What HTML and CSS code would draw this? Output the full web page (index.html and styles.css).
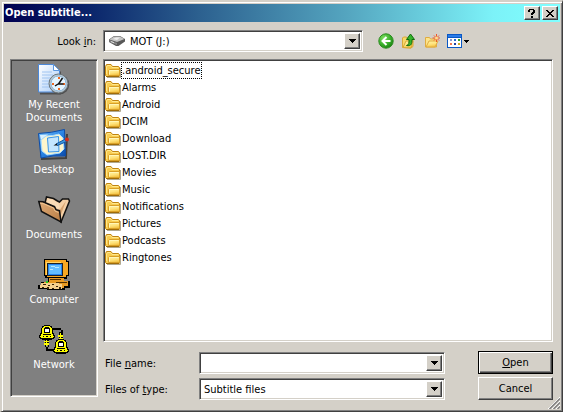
FILE: index.html
```html
<!DOCTYPE html>
<html lang="en">
<head>
<meta charset="utf-8">
<title>Open subtitle...</title>
<link rel="stylesheet" href="styles.css">
</head>
<body>
<svg class="defs" aria-hidden="true">
  <defs>
    <linearGradient id="gold" x1="0" y1="0" x2="0.3" y2="1">
      <stop offset="0" stop-color="#fff5a8"/><stop offset="0.6" stop-color="#ffe37c"/><stop offset="1" stop-color="#f4c548"/>
    </linearGradient>
    <linearGradient id="blue" x1="0" y1="0" x2="1" y2="1">
      <stop offset="0" stop-color="#7cc4fa"/><stop offset="0.5" stop-color="#2a84e4"/><stop offset="1" stop-color="#0848a8"/>
    </linearGradient>
    <radialGradient id="green" cx="0.35" cy="0.3" r="0.8">
      <stop offset="0" stop-color="#7ee060"/><stop offset="0.6" stop-color="#36ac28"/><stop offset="1" stop-color="#14780c"/>
    </radialGradient>
    <linearGradient id="paper" x1="0" y1="0" x2="1" y2="1">
      <stop offset="0" stop-color="#ffffff"/><stop offset="1" stop-color="#a8ccf8"/>
    </linearGradient>
    <linearGradient id="tan" x1="0" y1="0" x2="1" y2="1">
      <stop offset="0" stop-color="#e0ac78"/><stop offset="1" stop-color="#b87c44"/>
    </linearGradient>
    <symbol id="folder" viewBox="0 0 16 16">
      <path d="M2 14.500h13.500V5" fill="none" stroke="#b0a890"/>
      <path d="M.5 12.500v-9l1-2h4.500l1.500 2h6l1 1v8l-1 1h-12z" fill="#f8cc50" stroke="#c08410"/>
      <path d="M1.500 11V4l1-1.500h3l1.500 2h6" fill="none" stroke="#ffe88c"/>
      <path d="M3.500 12.500v-5l1-1h10v6z" fill="url(#gold)" stroke="#d8a028"/>
      <path d="M4.500 11.500v-4h9" fill="none" stroke="#fff6b8"/>
      <path d="M1 13.500h13.500" fill="none" stroke="#a06c08"/>
    </symbol>
    <symbol id="arrow" viewBox="0 0 7 4"><path d="M0 0h7v1h-1v1h-1v1h-1v1h-1v-1h-1v-1h-1v-1h-1z" shape-rendering="crispEdges"/></symbol>
    <symbol id="bell" viewBox="0 0 16 15">
      <path d="M5 0h6v1h2v2h1v5h1v2h1v3h-1v1h-2v1h-10v-1h-2v-1h-1v-3h1v-2h1v-5h1v-2h2z" fill="#000"/>
      <path d="M5 1h6v1h1v1h1v6h1v2h1v1h-1v1h-12v-1h-1v-1h1v-2h1v-6h1v-1h1z" fill="#ff0"/>
      <path d="M6 2h4v1h1v5h-6v-5h1zM4 9h8v1h-8zM4 11h1v1h-1zM7 11h2v1h-2zM11 11h1v1h-1z" fill="#000"/>
      <path d="M6 4h4v3h-4z" fill="#fff"/>
    </symbol>
  </defs>
</svg>
<main class="dialog">
  <header class="titlebar">
    <h1>Open subtitle...</h1>
    <button class="caption" type="button" aria-label="Help"><svg viewBox="0 0 8 9" width="8" height="9" shape-rendering="crispEdges"><path d="M1 0h5v1h1v3h-1v1h-1v1h-2v-2h1v-1h1v-2h-3v2h-2v-2h1zM3 7h2v2h-2z"/></svg></button>
    <button class="caption close" type="button" aria-label="Close"><svg viewBox="0 0 8 7" width="8" height="7" shape-rendering="crispEdges"><path d="M0 0h2v1h1v1h2v-1h1v-1h2v1h-1v1h-1v1h-1v1h1v1h1v1h1v1h-2v-1h-1v-1h-2v1h-1v1h-2v-1h1v-1h1v-1h1v-1h-1v-1h-1v-1h-1z"/></svg></button>
  </header>

  <div class="toolbar">
    <label for="lookin">Look <u>i</u>n:</label>
    <div class="combo lookin">
      <svg class="drive" viewBox="0 0 16 10" width="16" height="10"><path d="M0 3.500L5 0h6l5 3v2.500L9.500 10H7L0 6z" fill="#585858"/><path d="M.5 3.500L5 .5h6l4.500 2.500L8 6z" fill="#c4c4c4"/><path d="M.5 4L8 7v2L.5 6z" fill="#888"/><path d="M4 3l3-1.500h4L8 4z" fill="#eee"/><path d="M2 5.500l3 1.200" stroke="#ddd"/></svg>
      <select id="lookin"><option>MOT (J:)</option></select>
      <span class="drop"><svg width="7" height="4"><use href="#arrow"/></svg></span>
    </div>
    <div class="tools">
      <button type="button" aria-label="Back"><svg viewBox="0 0 16 16" width="16" height="16"><circle cx="8" cy="8" r="7.200" fill="url(#green)" stroke="#2c8c20"/><path d="M8.500 4L4.500 8l4 4M5 8h7.500" fill="none" stroke="#fff" stroke-width="2"/></svg></button>
      <button type="button" aria-label="Up one level"><svg viewBox="0 0 16 16" width="16" height="16"><path d="M1.500 14.500V5l1-1h3l1 1.500H12v8l-2 1.500z" fill="#f8d868" stroke="#d8a838"/><path d="M2 14.500L5 8h7l-2 7z" fill="url(#gold)" stroke="#d8a838"/><path d="M5.500 12.500c2.500-.5 2.500-2.500 2.500-6H5.500L9.500 1l4 5.500H11c0 4-.5 7-5.500 6z" fill="#35b52b" stroke="#116c0c"/></svg></button>
      <button type="button" aria-label="New folder"><svg viewBox="0 0 16 16" width="16" height="16"><path d="M1.500 14V4.500h4l1 1.500h6v8z" fill="#fce48c" stroke="#e0ac40"/><path d="M2 14l3-6h9l-3 6z" fill="url(#gold)" stroke="#e0ac40"/><path d="M12.500 1v8M8.500 5h8M10 2.500l5 5M15 2.500l-5 5" stroke="#f05428"/><circle cx="12.500" cy="5" r="1.500" fill="#ffe090"/></svg></button>
      <button class="view" type="button" aria-label="View menu"><svg viewBox="0 0 20 14" width="20" height="14" shape-rendering="crispEdges"><path d="M0 0h15v14H0z" fill="#0a58c4"/><path d="M1 1h13v2H1z" fill="#2a7ce8"/><path d="M1 4h13v9H1z" fill="#fff"/><path d="M3 5h2v2H3z" fill="#8898d0"/><path d="M7 5h2v2H7z" fill="#2868d0"/><path d="M11 5h2v2h-2z" fill="#30a030"/><path d="M3 9h2v2H3z" fill="#f07850"/><path d="M7 9h2v2H7z" fill="#2040a0"/><path d="M11 9h2v2h-2z" fill="#d0a820"/></svg><svg viewBox="0 0 5 3" width="5" height="3" shape-rendering="crispEdges"><path d="M0 0h5v1h-1v1h-1v1h-1v-1h-1v-1h-1z"/></svg></button>
    </div>
  </div>

  <div class="content">
    <nav class="places">
      <button type="button"><svg viewBox="0 0 32 32" width="32" height="32"><path d="M2 30.500h20v-22" fill="none" stroke="#505050" stroke-width="2"/><path d="M.5 1.500h15l6 6V29H.5z" fill="url(#paper)" stroke="#4c88d8"/><path d="M15.500 1.500v6h6z" fill="#fff" stroke="#5c98e0"/><path d="M4 9h10M4 12h11M4 15h8M4 18h7M4 21h7M4 24h8" stroke="#a0c4f0"/><circle cx="21.500" cy="21.500" r="9.800" fill="#505050"/><circle cx="20.500" cy="20.500" r="9.500" fill="#b8c8d4" stroke="#6a7478"/><circle cx="20.500" cy="20.500" r="7.500" fill="#e4f5ff" stroke="#8cb4d4"/><path d="M20 14h2v2h-2zM20 25h2v2h-2zM14 20h2v2h-2zM25 20h2v2h-2z" fill="#f06820"/><path d="M24.500 15l-4 6h5M20 21l-3 2" fill="none" stroke="#111" stroke-width="1.500"/></svg><span>My Recent Documents</span></button>
      <button type="button"><svg viewBox="0 0 32 32" width="32" height="32"><path d="M3 31l25-1 1-24" fill="none" stroke="#404040" stroke-width="2"/><path d="M.5 5.500Q13 5 26.500 1.500L27.500 28Q15 27 3 30z" fill="url(#blue)" stroke="#0c4ca8"/><path d="M2 7l8-.5L3 12z" fill="#d8f0ff"/><path d="M8 8q7 0 13-2l4 4 1 11-4 4-13 2-5-4-1-11z" fill="#fff6cc" stroke="#a8dcff"/><path d="M9.500 10l11-1.500.5 15-10.500.5z" fill="#c4e6ff" stroke="#3894e8"/><path d="M18 16l8.500-4.500 2 2-9 4z" fill="#3c98e0" stroke="#1454a0"/><path d="M15.500 17.500l3-2 1 2z" fill="#111"/><circle cx="29" cy="11.500" r="2" fill="#d42c18"/></svg><span>Desktop</span></button>
      <button type="button"><svg viewBox="0 0 32 32" width="32" height="32"><path d="M7 10l1.500-6 7 1.500 4 2.500 2 1 3-3h6l1 2-8.500 21z" fill="#f5d0a5" stroke="#111" stroke-width="1.500"/><path d="M9 9l1-3.500 5 1.500 5 3 2 4-2 2z" fill="#f9dcb8"/><path d="M28 8l-6 16-1-6z" fill="#d8a470"/><path d="M.8 8.500L5 8.700l11.500 5 1.500 3 3.500 1L23 29 3.500 18.500z" fill="url(#tan)" stroke="#111" stroke-width="1.500"/><path d="M2 10l3 .5 10.500 4.500 1.500 3 3.500 1.500" fill="none" stroke="#f0c490"/></svg><span>Documents</span></button>
      <button type="button"><svg viewBox="0 0 32 32" width="32" height="32" shape-rendering="crispEdges"><path d="M6 1h23v2h2v15h-2v3h-3v2h6v7h-5v2H9v-1H0v-4h3v-3h7v-4H7v-2H6z" fill="#000"/><path d="M7 2h21v2h2v13h-2v2H9v-2H7z" fill="#f7a823"/><path d="M8 4h15v2H10v11H8z" fill="#ffd66d"/><path d="M9 5h16v13H9z" fill="#222"/><path d="M10 6h14v11H10z" fill="#2684ee"/><path d="M11 7h12v9H11z" fill="#63bdff"/><path d="M13 8h4v1h-4zM17 9h4v1h-4zM12 11h3v1h-3z" fill="#b8e8ff"/><path d="M11 20h15v3h4v5h-4v2H21v-4H6v-2h5z" fill="#e89a24"/><path d="M12 21h11v1H12zM18 24h11v1H18z" fill="#513000"/><path d="M3 25h18v1h3v5H9v-1H2v-3h1z" fill="#f5d08d"/><path d="M5 26h3v1H5zM10 27h2v1h-2zM14 26h2v1h-2zM18 28h2v1h-2zM4 29h2v1H4zM9 29h2v2H9zM14 30h2v1h-2zM21 29h2v2h-2z" fill="#3a2408"/><path d="M8 23h2v2H8z" fill="#20d020"/></svg><span>Computer</span></button>
      <button type="button"><svg viewBox="0 0 32 32" width="32" height="32" shape-rendering="crispEdges"><path d="M14 5h9v2h2v4h-2V7h-9zM8 22v6h9v-2h-7v-4zM21 9h4v9h-4zM7 16h4v8H7z" fill="#000"/><path d="M22 10h1v2h2v2h-2v1h2v1h-4v-1h1v-1h-2v-2h2zM8 17h1v1h2v1h-2v1h2v2h-2v1h-1v-1h-2v-2h2v-1h-2v-1h2z" fill="#ff0"/><use href="#bell" x="1" y="2" width="16" height="15"/><use href="#bell" x="15" y="16" width="16" height="15"/></svg><span>Network</span></button>
    </nav>

    <section class="browser">
      <ul class="files">
        <li><button class="current" type="button"><svg width="16" height="16"><use href="#folder"/></svg><span>.android_secure</span></button></li>
        <li><button type="button"><svg width="16" height="16"><use href="#folder"/></svg><span>Alarms</span></button></li>
        <li><button type="button"><svg width="16" height="16"><use href="#folder"/></svg><span>Android</span></button></li>
        <li><button type="button"><svg width="16" height="16"><use href="#folder"/></svg><span>DCIM</span></button></li>
        <li><button type="button"><svg width="16" height="16"><use href="#folder"/></svg><span>Download</span></button></li>
        <li><button type="button"><svg width="16" height="16"><use href="#folder"/></svg><span>LOST.DIR</span></button></li>
        <li><button type="button"><svg width="16" height="16"><use href="#folder"/></svg><span>Movies</span></button></li>
        <li><button type="button"><svg width="16" height="16"><use href="#folder"/></svg><span>Music</span></button></li>
        <li><button type="button"><svg width="16" height="16"><use href="#folder"/></svg><span>Notifications</span></button></li>
        <li><button type="button"><svg width="16" height="16"><use href="#folder"/></svg><span>Pictures</span></button></li>
        <li><button type="button"><svg width="16" height="16"><use href="#folder"/></svg><span>Podcasts</span></button></li>
        <li><button type="button"><svg width="16" height="16"><use href="#folder"/></svg><span>Ringtones</span></button></li>
      </ul>
      <form class="fields">
        <label for="filename">File <u>n</u>ame:</label>
        <div class="combo"><input id="filename" type="text"><button class="drop" type="button" aria-label="Recent names"><svg width="7" height="4"><use href="#arrow"/></svg></button></div>
        <button class="push default" type="button"><span><u>O</u>pen</span></button>
        <label for="filetype">Files of <u>t</u>ype:</label>
        <div class="combo"><select id="filetype"><option>Subtitle files</option></select><span class="drop"><svg width="7" height="4"><use href="#arrow"/></svg></span></div>
        <button class="push" type="button">Cancel</button>
      </form>
    </section>
  </div>
  <svg class="grip" viewBox="0 0 12 12" width="12" height="12"><path d="M0 12L12 0M4 12l8-8M8 12l4-4" stroke="#fff"/><path d="M1.500 12L12 1.500M5.500 12L12 5.500M9.500 12L12 9.500" stroke="#808080" stroke-width="1.500"/></svg>
</main>
</body>
</html>
```
FILE: styles.css
```css
* { box-sizing: border-box; }

body {
  margin: 0;
  background: #d4d0c8;
  color: #000;
  font: 11px/13px Tahoma, "DejaVu Sans Condensed", "Liberation Sans", sans-serif;
}

button, input, select {
  font: inherit;
  color: inherit;
  border: 0;
  border-radius: 0;
  margin: 0;
  padding: 0;
  background: none;
}

svg { display: block; flex: none; }
.defs { position: absolute; width: 0; height: 0; }
u { text-underline-offset: 1px; text-decoration-skip-ink: none; }

.dialog {
  position: relative;
  display: flex;
  flex-direction: column;
  min-height: 100vh;
  padding: 2px;
  border: 2px solid;
  border-color: #d4d0c8 #404040 #404040 #d4d0c8;
  border-width: 2px 1px 1px 2px;
  box-shadow: inset 1px 1px #fff, inset -1px -1px #808080;
}

.titlebar {
  display: flex;
  align-items: center;
  height: 18px;
  padding: 0 2px 0 1px;
  background: linear-gradient(90deg, #000050, #0a246a 15%, #2c608f 35%, #55a6c0 62%, #7cf2f8 88%, #80ffff);
}

.titlebar h1 {
  flex: 1;
  margin: 0;
  color: #fff;
  font-size: 11px;
  line-height: 18px;
}

.caption, .drop, .push {
  display: flex;
  align-items: center;
  justify-content: center;
  background: #d4d0c8;
  border: 1px solid;
  border-color: #fff #404040 #404040 #fff;
  box-shadow: inset -1px -1px #808080;
}

.caption { width: 16px; height: 14px; }
.close { margin-left: 2px; }

.toolbar {
  display: flex;
  align-items: center;
  padding: 8px 0 7px;
}

.toolbar label {
  width: 99px;
  padding-right: 7px;
  text-align: right;
}

.combo {
  position: relative;
  display: flex;
  height: 22px;
  padding: 1px;
  background: #fff;
  border: 1px solid;
  border-color: #808080 #fff #fff #808080;
  box-shadow: inset 1px 1px #404040, inset -1px -1px #d4d0c8;
}

.lookin { flex: 0 1 260px; }

.combo input, .combo select {
  flex: 1;
  min-width: 0;
  padding: 0 20px 0 3px;
  appearance: none;
  outline: 0;
}

.lookin select { padding-left: 25px; }

.drive {
  position: absolute;
  left: 5px;
  top: 5px;
}

.drop {
  position: absolute;
  top: 2px;
  right: 2px;
  bottom: 2px;
  width: 16px;
}

span.drop { pointer-events: none; }

.tools {
  display: flex;
  align-items: center;
  gap: 7px;
  margin-left: 15px;
}

.tools .view {
  display: flex;
  align-items: center;
}

.view svg + svg { margin-left: -3px; }

.content {
  flex: 1;
  display: grid;
  grid-template-columns: 88px 1fr;
  gap: 5px;
  padding: 0 7px 9px 6px;
}

.places {
  display: flex;
  flex-direction: column;
  margin-bottom: 3px;
  padding-top: 3px;
  background: #808080;
  border: 1px solid;
  border-color: #808080 #fff #fff #808080;
  box-shadow: inset 1px 1px #404040, inset -1px -1px #d4d0c8;
}

.places button {
  display: flex;
  flex-direction: column;
  align-items: center;
  gap: 3px;
  height: 65px;
  padding: 0 10px;
  color: #fff;
}

.places svg { overflow: visible; }

.browser {
  display: flex;
  flex-direction: column;
  gap: 9px;
}

.files {
  flex: 1;
  margin: 0;
  padding: 2px 1px;
  list-style: none;
  background: #fff;
  border: 1px solid;
  border-color: #808080 #fff #fff #808080;
  box-shadow: inset 1px 1px #404040, inset -1px -1px #d4d0c8;
}

.files button {
  display: flex;
  align-items: center;
  height: 17px;
}

.files span {
  padding: 1px;
  line-height: 15px;
}

.files .current span { outline: 1px dotted #000; outline-offset: -1px; }

.fields {
  display: grid;
  grid-template-columns: 94px 1fr 75px;
  grid-template-rows: 23px 23px;
  align-items: end;
  row-gap: 3px;
  margin: 0;
  padding-left: 2px;
}

.fields label { padding-bottom: 4px; }

.fields .combo { margin-right: 33px; }

.push { height: 23px; }

.default {
  border-color: #000;
  box-shadow: inset 1px 1px #fff, inset -1px -1px #404040, inset -2px -2px #808080;
}

.grip {
  position: absolute;
  right: 2px;
  bottom: 2px;
}
```
